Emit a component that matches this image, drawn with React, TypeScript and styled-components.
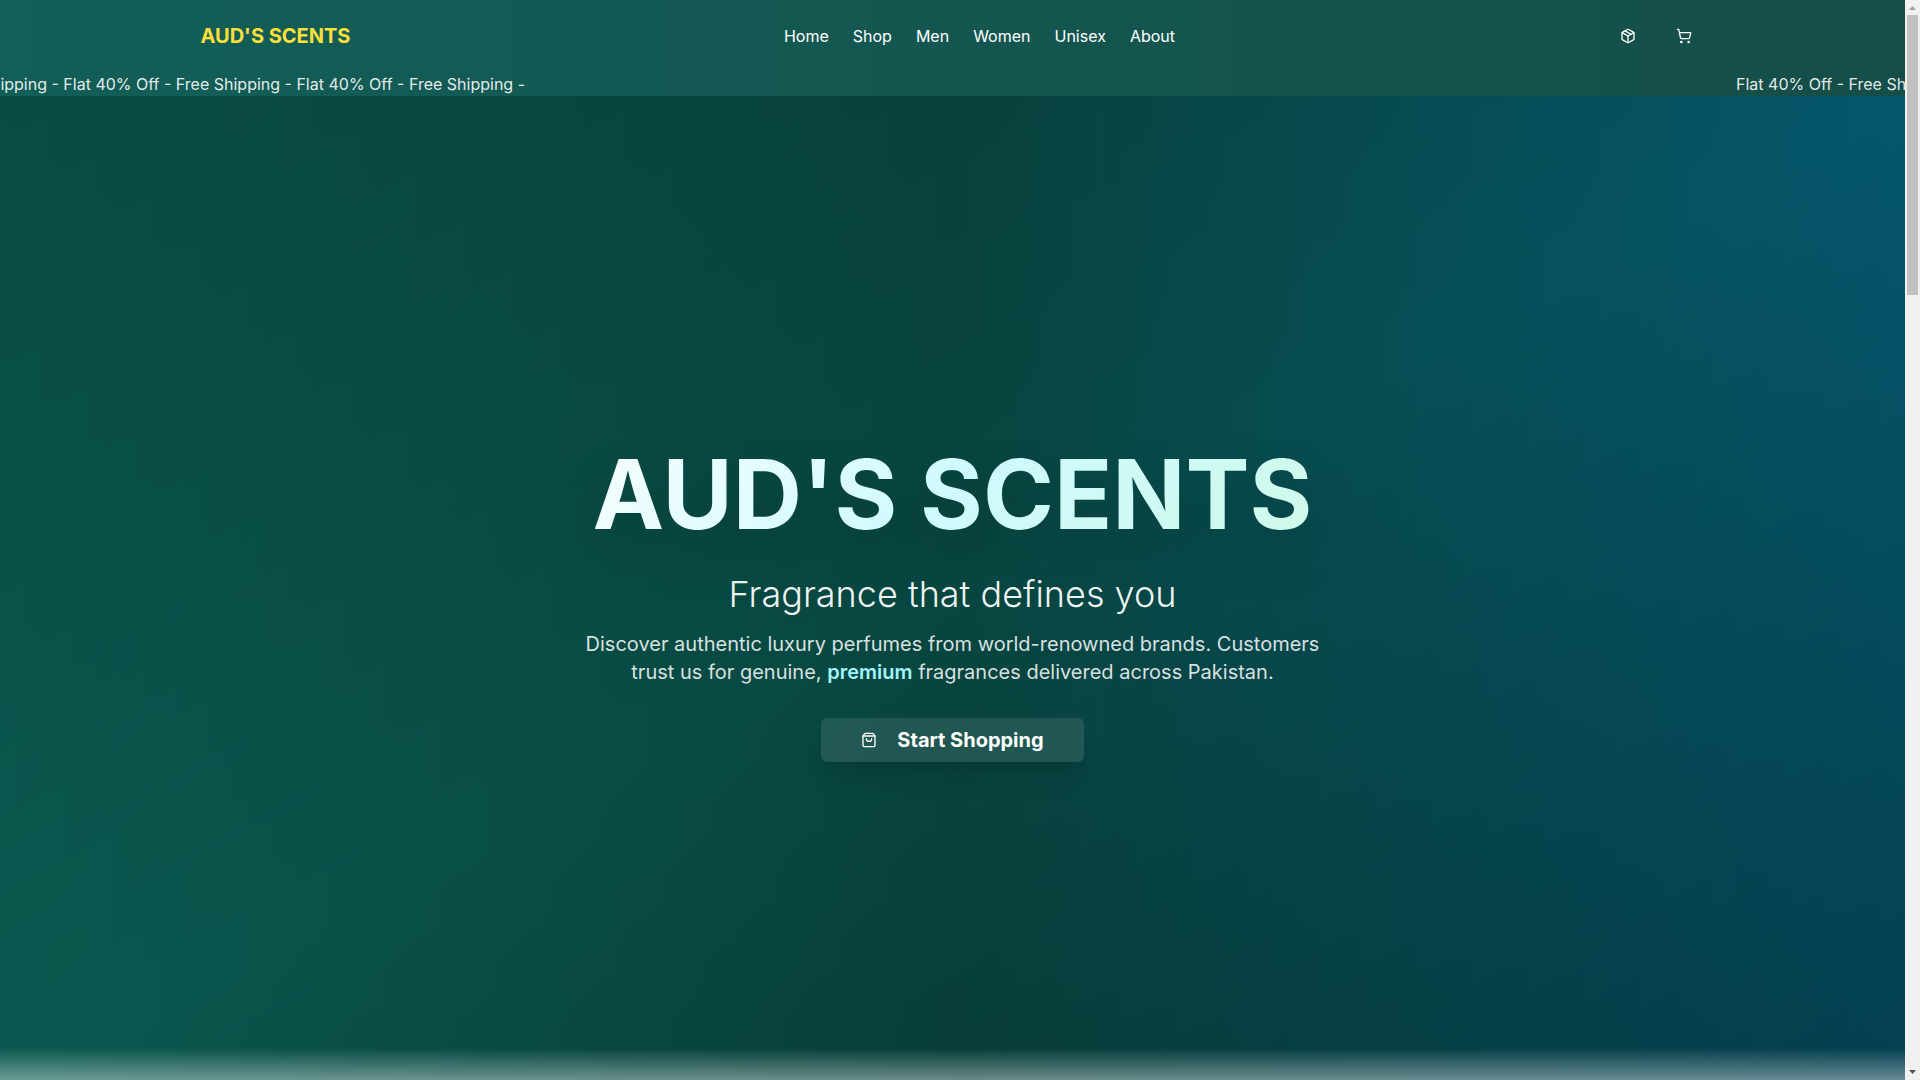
import React from "react";
import styled, { createGlobalStyle } from "styled-components";
import { Package, ShoppingBag, ShoppingCart } from "lucide-react";

const GlobalStyle = createGlobalStyle`
  *, *::before, *::after { box-sizing: border-box; }
  body {
    margin: 0;
    font-family: Inter, "Liberation Sans", sans-serif;
    font-size: 16px;
    line-height: 24px;
    color: #fff;
  }
  h1, h2, p, ul { margin: 0; padding: 0; }
  a { color: inherit; text-decoration: none; }
`;

const Shell = styled.div`
  display: flex;
  height: 100vh;
  overflow: hidden;
`;

const Page = styled.div`
  display: flex;
  flex-direction: column;
  flex: 1;
  min-width: 0;
`;

const Header = styled.header`
  background: linear-gradient(to right, #125f58, #154e48);
`;

const Bar = styled.div`
  display: flex;
  align-items: center;
  justify-content: space-between;
  height: 72px;
  max-width: 1536px;
  margin: 0 auto;
  padding: 0 16px;
`;

const Brand = styled.a`
  font-size: 20px;
  line-height: 28px;
  font-weight: 700;
  color: #fddf3a;
`;

const NavList = styled.ul`
  display: flex;
  gap: 24px;
  list-style: none;
`;

const Actions = styled.div`
  display: flex;
  gap: 16px;
`;

const IconButton = styled.button`
  display: flex;
  align-items: center;
  justify-content: center;
  width: 40px;
  height: 36px;
  padding: 0;
  border: 0;
  border-radius: 6px;
  background: transparent;
  color: #fff;
  cursor: pointer;
`;

const Ticker = styled.div`
  display: flex;
  justify-content: space-between;
  overflow: hidden;
  white-space: nowrap;
  color: rgba(255, 255, 255, 0.9);
`;

const TickerRun = styled.span<{ $width: number; $trailing?: boolean }>`
  display: flex;
  flex: none;
  justify-content: ${(p) => (p.$trailing ? "flex-end" : "flex-start")};
  width: ${(p) => p.$width}px;
  overflow: hidden;
`;

const Hero = styled.main`
  display: flex;
  flex: 1;
  flex-direction: column;
  background:
    linear-gradient(to top, rgba(255, 255, 255, 0.4), rgba(255, 255, 255, 0)) bottom / 100% 32px no-repeat,
    linear-gradient(to bottom right, rgba(0, 0, 0, 0.15), transparent, rgba(0, 0, 0, 0.27)),
    linear-gradient(to right, #0a5950, #084640, #05576d);
`;

const HeroContent = styled.div`
  display: flex;
  flex: 1;
  flex-direction: column;
  align-items: center;
  justify-content: center;
  padding: 32px 16px 0;
  text-align: center;
`;

const Title = styled.h1`
  width: 100%;
  max-width: 896px;
  margin-bottom: 32px;
  font-size: 96px;
  line-height: 96px;
  font-weight: 700;
  color: transparent;
  background: linear-gradient(135deg, #fff, #cefafe, #d0fae5);
  background-clip: text;
  -webkit-background-clip: text;
  filter: drop-shadow(0 25px 25px rgba(0, 0, 0, 0.15));
`;

const Tagline = styled.h2`
  margin-bottom: 16px;
  font-size: 36px;
  line-height: 40px;
  font-weight: 300;
  color: rgba(255, 255, 255, 0.95);
`;

const Lead = styled.p`
  max-width: 768px;
  margin-bottom: 32px;
  font-size: 20px;
  line-height: 28px;
  color: rgba(255, 255, 255, 0.85);
`;

const Accent = styled.strong`
  font-weight: 600;
  color: #a2f4fd;
`;

const ShopButton = styled.button`
  display: flex;
  align-items: center;
  gap: 20px;
  height: 44px;
  padding: 0 40px;
  border: 0;
  border-radius: 6px;
  background: rgba(255, 255, 255, 0.1);
  box-shadow: 0 20px 25px -5px rgba(0, 0, 0, 0.1), 0 8px 10px -6px rgba(0, 0, 0, 0.1);
  color: #fff;
  font-family: inherit;
  font-size: 20px;
  line-height: 28px;
  font-weight: 700;
  cursor: pointer;
`;

const Scrollbar = styled.div`
  display: flex;
  flex-direction: column;
  flex: none;
  align-items: center;
  width: 15px;
  background: #f1f1f1;
`;

const Arrow = styled.svg`
  flex: none;
  width: 15px;
  height: 15px;
`;

const Thumb = styled.div`
  width: 11px;
  height: 280px;
  margin-bottom: auto;
  background: #c1c1c1;
`;

const links = ["Home", "Shop", "Men", "Women", "Unisex", "About"];
const offer = "Flat 40% Off - Free Shipping - ".repeat(4).trim();

export default function App() {
  return (
    <Shell>
      <GlobalStyle />
      <Page>
        <Header>
          <Bar>
            <Brand href="#">AUD'S SCENTS</Brand>
            <nav>
              <NavList>
                {links.map((label) => (
                  <li key={label}>
                    <a href="#">{label}</a>
                  </li>
                ))}
              </NavList>
            </nav>
            <Actions>
              <IconButton aria-label="Orders"><Package size={16} /></IconButton>
              <IconButton aria-label="Cart"><ShoppingCart size={16} /></IconButton>
            </Actions>
          </Bar>
          <Ticker>
            <TickerRun $width={525} $trailing>{offer}</TickerRun>
            <TickerRun $width={169}>{offer}</TickerRun>
          </Ticker>
        </Header>
        <Hero>
          <HeroContent>
            <Title>AUD'S SCENTS</Title>
            <Tagline>Fragrance that defines you</Tagline>
            <Lead>
              Discover authentic luxury perfumes from world-renowned brands. Customers trust us for
              genuine, <Accent>premium</Accent> fragrances delivered across Pakistan.
            </Lead>
            <ShopButton>
              <ShoppingBag size={16} />
              Start Shopping
            </ShopButton>
          </HeroContent>
        </Hero>
      </Page>
      <Scrollbar aria-hidden="true">
        <Arrow viewBox="0 0 15 15"><path d="M4 10h7L7.500 6z" fill="#a3a3a3" /></Arrow>
        <Thumb />
        <Arrow viewBox="0 0 15 15"><path d="M4 5h7L7.500 9z" fill="#505050" /></Arrow>
      </Scrollbar>
    </Shell>
  );
}
